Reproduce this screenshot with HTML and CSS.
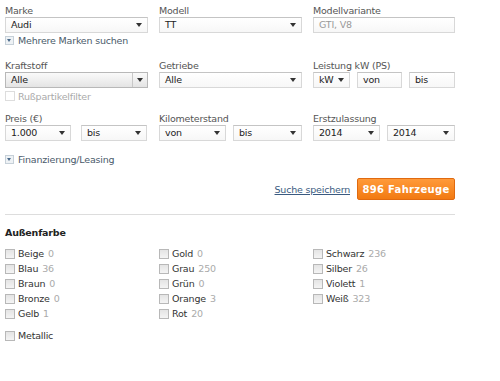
FILE: index.html
```html
<!DOCTYPE html>
<html lang="de">
<head>
    <meta charset="UTF-8">
    <title>Fahrzeugsuche</title>
    <link rel="stylesheet" href="styles.css">
</head>
<body>
    <div class="search">
        <div class="row">
            <div class="field">
                <label>Marke</label>
                <div class="select"><span>Audi</span><i class="arrow"></i></div>
            </div>
            <div class="field">
                <label>Modell</label>
                <div class="select"><span>TT</span><i class="arrow"></i></div>
            </div>
            <div class="field">
                <label>Modellvariante</label>
                <div class="input placeholder">GTI, V8</div>
            </div>
        </div>
        <div class="toggle toggle-first"><i class="toggle-icon"></i>Mehrere Marken suchen</div>

        <div class="row row-gap">
            <div class="field">
                <label>Kraftstoff</label>
                <div class="select active"><span>Alle</span><i class="arrow"></i></div>
            </div>
            <div class="field">
                <label>Getriebe</label>
                <div class="select"><span>Alle</span><i class="arrow"></i></div>
            </div>
            <div class="field">
                <label>Leistung kW (PS)</label>
                <div class="split">
                    <div class="select unit"><span>kW</span><i class="arrow"></i></div>
                    <div class="input">von</div>
                    <div class="input">bis</div>
                </div>
            </div>
        </div>
        <div class="check disabled"><i class="box"></i>Rußpartikelfilter</div>

        <div class="row row-gap2">
            <div class="field">
                <label>Preis (€)</label>
                <div class="pair">
                    <div class="select"><span>1.000</span><i class="arrow"></i></div>
                    <div class="select"><span>bis</span><i class="arrow"></i></div>
                </div>
            </div>
            <div class="field">
                <label>Kilometerstand</label>
                <div class="pair">
                    <div class="select"><span>von</span><i class="arrow"></i></div>
                    <div class="select"><span>bis</span><i class="arrow"></i></div>
                </div>
            </div>
            <div class="field">
                <label>Erstzulassung</label>
                <div class="pair">
                    <div class="select"><span>2014</span><i class="arrow"></i></div>
                    <div class="select"><span>2014</span><i class="arrow"></i></div>
                </div>
            </div>
        </div>
        <div class="toggle toggle-fin"><i class="toggle-icon"></i>Finanzierung/Leasing</div>

        <div class="actions">
            <a href="#" class="save">Suche speichern</a>
            <button class="submit">896 Fahrzeuge</button>
        </div>

        <hr>

        <h3>Außenfarbe</h3>
        <div class="colors">
            <div class="col">
                <div class="check"><i class="box"></i>Beige <span class="count">0</span></div>
                <div class="check"><i class="box"></i>Blau <span class="count">36</span></div>
                <div class="check"><i class="box"></i>Braun <span class="count">0</span></div>
                <div class="check"><i class="box"></i>Bronze <span class="count">0</span></div>
                <div class="check"><i class="box"></i>Gelb <span class="count">1</span></div>
            </div>
            <div class="col">
                <div class="check"><i class="box"></i>Gold <span class="count">0</span></div>
                <div class="check"><i class="box"></i>Grau <span class="count">250</span></div>
                <div class="check"><i class="box"></i>Grün <span class="count">0</span></div>
                <div class="check"><i class="box"></i>Orange <span class="count">3</span></div>
                <div class="check"><i class="box"></i>Rot <span class="count">20</span></div>
            </div>
            <div class="col">
                <div class="check"><i class="box"></i>Schwarz <span class="count">236</span></div>
                <div class="check"><i class="box"></i>Silber <span class="count">26</span></div>
                <div class="check"><i class="box"></i>Violett <span class="count">1</span></div>
                <div class="check"><i class="box"></i>Weiß <span class="count">323</span></div>
            </div>
        </div>
        <div class="check metallic"><i class="box"></i>Metallic</div>
    </div>
</body>
</html>
```

FILE: styles.css
```css
body {
    margin: 0;
    background: #fff;
    font-family: "DejaVu Sans", Verdana, sans-serif;
    font-size: 9.5px;
    letter-spacing: -0.2px;
    color: #333;
}
.search {
    width: 450px;
    padding: 4px 0 0 5px;
}
.row {
    display: grid;
    grid-template-columns: 143px 143px 142px;
    column-gap: 11px;
}
.row-gap {
    margin-top: 13px;
}
.row-gap2 {
    margin-top: 10px;
}
.field label {
    display: block;
    color: #555;
    height: 13px;
    line-height: 13px;
}
.select, .input {
    box-sizing: border-box;
    height: 16px;
    border: 1px solid #d8d8d8;
    border-top-color: #c4c4c4;
    background: linear-gradient(#fff, #f7f7f7);
    display: flex;
    align-items: center;
    padding-left: 5px;
    color: #222;
    line-height: 14px;
}
.select span {
    flex: 1;
}
.arrow {
    width: 0;
    height: 0;
    border-left: 3px solid transparent;
    border-right: 3px solid transparent;
    border-top: 4px solid #333;
    margin-right: 5px;
}
.select.active {
    background: linear-gradient(#fafafa, #e4e4e4);
    border-color: #b8b8b8;
}
.select.active span {
    border-right: 1px solid #c8c8c8;
    height: 14px;
}
.select.active .arrow {
    margin: 0 4px;
}
.placeholder {
    color: #999;
}
.split {
    display: grid;
    grid-template-columns: 37px 45px 46px;
    column-gap: 7px;
}
.pair {
    display: grid;
    grid-template-columns: 66px 66px;
    column-gap: 10px;
}
.field:nth-child(2) .pair {
    grid-template-columns: 67px 69px;
    column-gap: 7px;
}
.field:nth-child(3) .pair {
    grid-template-columns: 67px 68px;
    column-gap: 7px;
}
.toggle {
    display: flex;
    align-items: center;
    height: 12px;
    color: #4a5a6a;
}
.toggle-first {
    margin-top: 1px;
}
.toggle-fin {
    margin-top: 12px;
}
.toggle-icon {
    box-sizing: border-box;
    width: 9px;
    height: 9px;
    border: 1px solid #c6d0d8;
    background: #eef2f5;
    margin-right: 4px;
    position: relative;
}
.toggle-icon::after {
    content: "";
    position: absolute;
    left: 1px;
    top: 2px;
    border-left: 2.5px solid transparent;
    border-right: 2.5px solid transparent;
    border-top: 3px solid #4a6a8a;
}
.check {
    display: flex;
    align-items: center;
    height: 15px;
    color: #333;
}
.box {
    box-sizing: border-box;
    width: 10px;
    height: 10px;
    border: 1px solid #b8b8b8;
    background: linear-gradient(#e4e4e4, #f4f4f4);
    margin-right: 3px;
}
.check.disabled {
    color: #aaa;
    margin-top: 2px;
    height: 12px;
}
.check.disabled .box {
    border-color: #ddd;
    background: #fff;
}
.count {
    color: #aaa;
    margin-left: 4px;
}
.actions {
    display: flex;
    justify-content: flex-end;
    align-items: center;
    gap: 7px;
    margin-top: 13px;
}
.save {
    color: #3a5a80;
    text-decoration: underline;
}
.submit {
    width: 98px;
    height: 22px;
    border: 1px solid #e06a10;
    border-radius: 2px;
    background: linear-gradient(#ff9a3a, #f27a12);
    color: #fff;
    font-family: inherit;
    font-size: 10px;
    font-weight: bold;
    letter-spacing: 0.3px;
    padding: 0;
}
hr {
    border: 0;
    border-top: 1px solid #ddd;
    margin: 14px 0 0;
}
h3 {
    margin: 12px 0 8px;
    font-size: 9.5px;
    font-weight: bold;
    color: #222;
}
.colors {
    display: grid;
    grid-template-columns: 143px 143px 142px;
    column-gap: 11px;
}
.metallic {
    margin-top: 7px;
}
```
